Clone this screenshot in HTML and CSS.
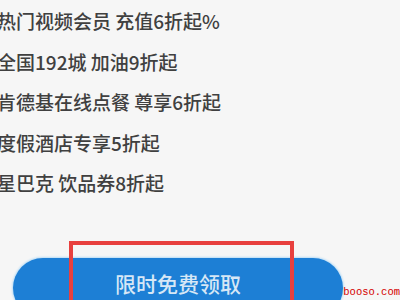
FILE: index.html
```html
<!DOCTYPE html>
<html lang="zh-CN">
<head>
    <meta charset="UTF-8">
    <meta name="viewport" content="width=device-width, initial-scale=1.0">
    <title>会员权益</title>
    <link rel="stylesheet" href="styles.css">
</head>
<body>
    <ul class="perks">
        <li>热门视频会员 充值6折起%</li>
        <li>全国192城 加油9折起</li>
        <li>肯德基在线点餐 尊享6折起</li>
        <li>度假酒店专享5折起</li>
        <li>星巴克 饮品券8折起</li>
    </ul>

    <div class="action">
        <button class="claim" type="button">限时免费领取</button>
        <div class="mark"></div>
    </div>

    <div class="watermark">booso.com</div>
</body>
</html>
```

FILE: styles.css
```css
html, body {
    margin: 0;
    height: 300px;
    overflow: hidden;
}

body {
    background-color: #f6f6f6;
    font-family: "Noto Sans CJK SC", "Noto Sans", sans-serif;
    position: relative;
}

.perks {
    list-style: none;
    margin: 0;
    padding: 1px 0 0 0;
    margin-left: -3px;
}

.perks li {
    font-size: 19px;
    font-weight: 500;
    line-height: 40.5px;
    color: #404040;
    white-space: nowrap;
}

.action {
    position: relative;
    margin-top: 54px;
    padding-left: 13px;
}

.claim {
    width: 330px;
    height: 60px;
    border: none;
    border-radius: 30px;
    background-color: #1d7fd5;
    box-shadow: 0 0 2px 1px #b8dcf6;
    color: #d6e7f6;
    font-family: "Noto Sans CJK SC", "Noto Sans", sans-serif;
    font-size: 21px;
    font-weight: 500;
    padding: 0 0 9px 0;
    display: block;
}

.mark {
    position: absolute;
    left: 69px;
    top: -17px;
    width: 217px;
    height: 100px;
    border: 4px solid #e8403e;
}

.watermark {
    position: absolute;
    right: 0;
    bottom: 2px;
    font-family: "Liberation Mono", monospace;
    font-size: 10.5px;
    color: #d40000;
}
```
